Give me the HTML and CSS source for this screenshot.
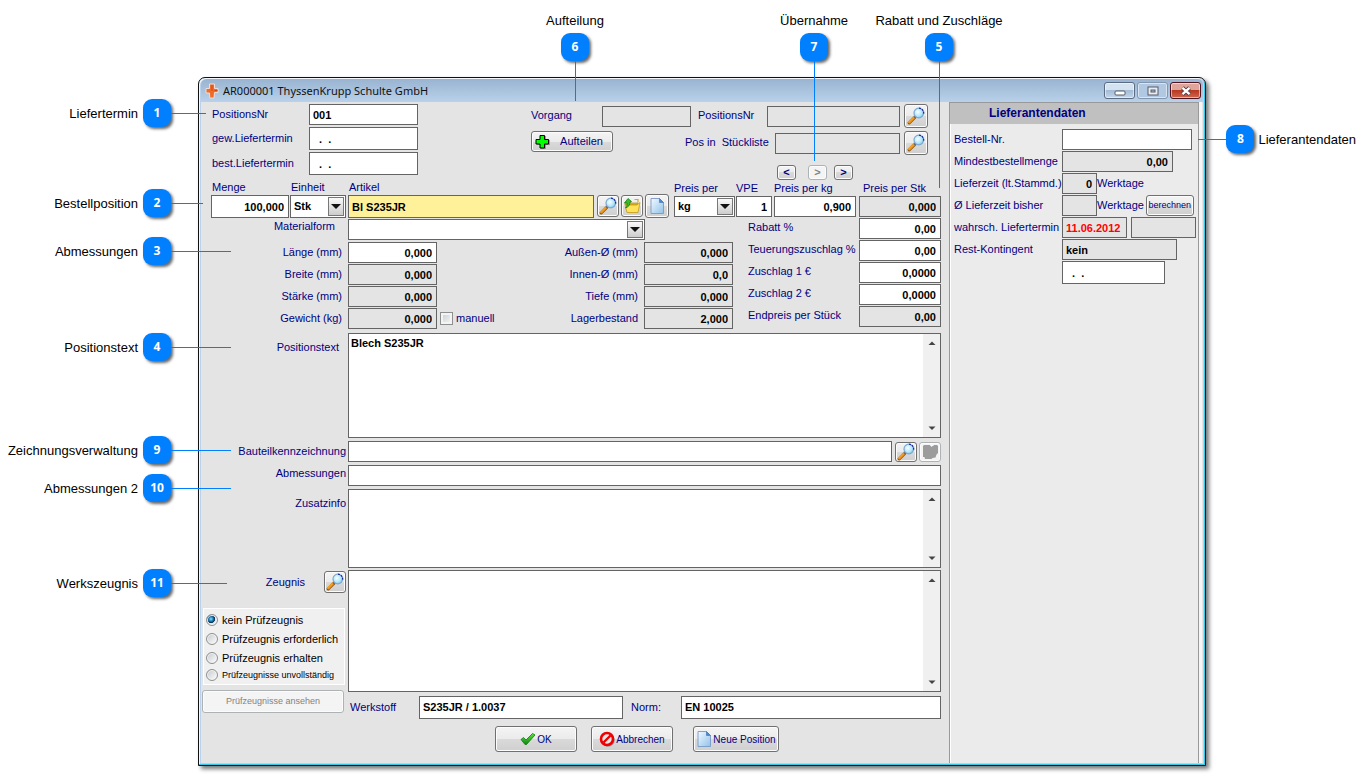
FILE: index.html
```html
<!DOCTYPE html>
<html lang="de">
<head>
<meta charset="utf-8">
<meta name="viewport" content="width=device-width, initial-scale=1">
<title>AR000001 ThyssenKrupp Schulte GmbH</title>
<link rel="stylesheet" href="styles.css">
</head>
<body>
<svg class="sprite" aria-hidden="true">
  <defs>
    <linearGradient id="handle" x1="0" y1="0" x2="1" y2="1"><stop offset="0" stop-color="#ffc04a"/><stop offset="1" stop-color="#e07800"/></linearGradient>
    <radialGradient id="lens" cx=".4" cy=".4" r=".7"><stop offset="0" stop-color="#f4ffff"/><stop offset=".6" stop-color="#b4e6fa"/><stop offset="1" stop-color="#6cb4e4"/></radialGradient>
    <linearGradient id="paper" x1="0" y1="0" x2="1" y2="1"><stop offset="0" stop-color="#f4faff"/><stop offset="1" stop-color="#8fc2ea"/></linearGradient>
    <linearGradient id="tick" x1="0" y1="0" x2="0" y2="1"><stop offset="0" stop-color="#5fe03a"/><stop offset="1" stop-color="#0a8a10"/></linearGradient>
  </defs>
  <symbol id="i-search" viewBox="0 0 18 18">
    <path d="M2.200 15.800 8 10" stroke="#8a5a20" stroke-width="3.200" stroke-linecap="round"/>
    <path d="M2.400 15 7.600 9.800" stroke="url(#handle)" stroke-width="2.600" stroke-linecap="round"/>
    <path d="M7.200 10.800l1.600-1.600" stroke="#666" stroke-width="2"/>
    <circle cx="11.800" cy="6" r="4.800" fill="url(#lens)" stroke="#7ca8d4" stroke-width="1.200"/>
    <path d="M12 1.200a4.800 4.800 0 0 1 4.400 6.400" fill="none" stroke="#1a2c9c" stroke-width="1.300" stroke-dasharray="2 1"/>
  </symbol>
  <symbol id="i-folder" viewBox="0 0 18 18">
    <path d="M2 8V5.500l1-1h4l1 1.500h7V8z" fill="#e8b820" stroke="#b08a10" stroke-width=".7"/>
    <path d="M2 8h12l3-2.500-2 10H4z" fill="#ffe25a" stroke="#c09a18" stroke-width=".8"/>
    <path d="M11.500 2.500h3.500v3" fill="none" stroke="#d8a820" stroke-width="1.200"/>
    <path d="M1.500 6 5 1.500 8.500 4.500 7 5c0 3-1.500 5-4.500 6C4 9 4.300 7.500 4 5.800z" fill="#35c02a" stroke="#12801a" stroke-width=".8"/>
  </symbol>
  <symbol id="i-page" viewBox="0 0 16 18">
    <path d="M2 1.500h8.500L14.500 5.500v11H2z" fill="url(#paper)" stroke="#7898c8" stroke-width=".9"/>
    <path d="M10.500 1.500v4h4z" fill="#4a8ad4" stroke="#4a78b8" stroke-width=".7"/>
  </symbol>
  <symbol id="i-blob" viewBox="0 0 18 18">
    <path d="M2 3l1-1h6l1.500 2 2-2H16l1 1v7l-1.500 1.500-1 3-3 .5-1 1H4l-.5-2L2 14z" fill="#9c9c9c"/>
    <path d="M10 1.500v1.500M12 1.500v1.500" stroke="#fff" stroke-width="1"/>
  </symbol>
  <symbol id="i-down" viewBox="0 0 10 6"><path d="M0 .5h10L5 5.500z" fill="#111"/></symbol>
  <symbol id="i-sdown" viewBox="0 0 8 5"><path d="M.5.5h7L4 4z" fill="#444"/></symbol>
  <symbol id="i-sup" viewBox="0 0 8 5"><path d="M.5 4h7L4 .5z" fill="#444"/></symbol>
</svg>

<div class="figure">
  <main class="window">
    <header class="titlebar">
      <svg class="logo" viewBox="0 0 14 16"><path d="M4.500 1h5v4.500H13v4H9.500L9 15H4.800L4.500 10H1V5.500h3.500z" fill="#f26a28" stroke="#eadfd8" stroke-width="1"/><path d="M7 2v6M9.500 7.500h3" stroke="#d04a10" stroke-width="1"/></svg>
      <h1 class="title">AR000001 ThyssenKrupp Schulte GmbH</h1>
      <div class="controls">
        <button class="control" aria-label="Minimieren"><svg width="12" height="6" viewBox="0 0 12 6"><rect x="1" y="1" width="10" height="4" rx="1" fill="#fff" stroke="#555a66"/></svg></button>
        <button class="control control-dim" aria-label="Maximieren"><svg width="12" height="10" viewBox="0 0 12 10"><rect x="1" y="1" width="10" height="8" fill="#e8ecf2" stroke="#555a66"/><rect x="4" y="4" width="4" height="2" fill="#a9c0da" stroke="#555a66"/></svg></button>
        <button class="control control-close" aria-label="Schließen"><svg width="14" height="10" viewBox="0 0 14 10"><path d="M3.500 1.800l7 6.400M10.500 1.800l-7 6.400" stroke="#4a3a44" stroke-width="4"/><path d="M3.500 1.800l7 6.400M10.500 1.800l-7 6.400" stroke="#fff" stroke-width="2.400"/></svg></button>
      </div>
    </header>

    <div class="content">
      <form class="form">
        <section class="head">
          <div class="dates">
            <label for="posnr">PositionsNr</label><input id="posnr" value="001">
            <label for="gew">gew.Liefertermin</label><input class="date" id="gew" value=".  .">
            <label for="best">best.Liefertermin</label><input class="date" id="best" value=".  .">
          </div>
          <div class="origin">
            <div class="origin-row">
              <label class="l-vorgang" for="vorgang">Vorgang</label><input class="w-vorgang" id="vorgang" readonly>
              <label class="l-pos2" for="pos2">PositionsNr</label><input class="w-pos2" id="pos2" readonly>
              <button type="button" class="btn icon-lg" aria-label="Position suchen"><svg class="icon"><use href="#i-search"/></svg></button>
            </div>
            <div class="origin-row">
              <button type="button" class="btn split"><svg width="16" height="16" viewBox="0 0 16 16"><path d="M6 2h5v4h4v5h-4v4H6v-4H2V6h4z" fill="#999"/><path d="M5 1.500h4.500v4h4V10h-4v4H5v-4H1V5.500h4z" fill="#0f0" stroke="#000"/></svg>Aufteilen</button>
              <label class="l-list" for="liste">Pos in &nbsp;Stückliste</label><input class="w-list" id="liste" readonly>
              <button type="button" class="btn icon-lg" aria-label="Stückliste suchen"><svg class="icon"><use href="#i-search"/></svg></button>
            </div>
            <div class="nav">
              <button type="button" class="btn step">&lt;</button>
              <button type="button" class="btn step step-mid" disabled>&gt;</button>
              <button type="button" class="btn step">&gt;</button>
            </div>
          </div>
        </section>

        <section class="order">
          <div class="field w-menge"><label for="menge">Menge</label><input class="num tall" id="menge" value="100,000"></div>
          <div class="field w-einheit"><label for="einheit">Einheit</label><span class="select tall"><select id="einheit"><option>Stk</option></select><svg class="arrow"><use href="#i-down"/></svg></span></div>
          <div class="field artikel"><label for="artikel">Artikel</label><input class="tall active" id="artikel" value="Bl S235JR"></div>
          <div class="tools">
            <button type="button" class="btn icon-sm" aria-label="Artikel suchen"><svg class="icon"><use href="#i-search"/></svg></button>
            <button type="button" class="btn icon-sm" aria-label="Artikel öffnen"><svg class="icon"><use href="#i-folder"/></svg></button>
            <button type="button" class="btn icon-lg" aria-label="Neuer Artikel"><svg class="icon"><use href="#i-page"/></svg></button>
          </div>
          <div class="pricing">
            <div class="field w-per"><label for="per">Preis per</label><span class="select"><select id="per"><option>kg</option></select><svg class="arrow"><use href="#i-down"/></svg></span></div>
            <div class="field w-vpe"><label for="vpe">VPE</label><input class="num" id="vpe" value="1"></div>
            <div class="field w-kg"><label for="pkg">Preis per kg</label><input class="num" id="pkg" value="0,900"></div>
            <div class="field w-stk"><label for="pstk">Preis per Stk</label><input class="num" id="pstk" value="0,000" readonly></div>
          </div>
        </section>

        <section class="details">
          <div class="measures">
            <div class="material"><label for="material">Materialform</label><span class="select"><select id="material"><option></option></select><svg class="arrow"><use href="#i-down"/></svg></span></div>
            <div class="dims">
              <label for="laenge">Länge (mm)</label><input class="num" id="laenge" value="0,000"><span></span>
              <label for="aussen">Außen-Ø (mm)</label><input class="num" id="aussen" value="0,000" readonly>
              <label for="breite">Breite (mm)</label><input class="num" id="breite" value="0,000" readonly><span></span>
              <label for="innen">Innen-Ø (mm)</label><input class="num" id="innen" value="0,0" readonly>
              <label for="staerke">Stärke (mm)</label><input class="num" id="staerke" value="0,000" readonly><span></span>
              <label for="tiefe">Tiefe (mm)</label><input class="num" id="tiefe" value="0,000" readonly>
              <label for="gewicht">Gewicht (kg)</label><input class="num" id="gewicht" value="0,000" readonly>
              <label class="manual"><input type="checkbox" class="check">manuell</label>
              <label for="lager">Lagerbestand</label><input class="num" id="lager" value="2,000" readonly>
            </div>
          </div>
          <div class="prices">
            <label for="rabatt">Rabatt %</label><input class="num" id="rabatt" value="0,00">
            <label for="teuerung">Teuerungszuschlag %</label><input class="num" id="teuerung" value="0,00">
            <label for="z1">Zuschlag 1 €</label><input class="num" id="z1" value="0,0000">
            <label for="z2">Zuschlag 2 €</label><input class="num" id="z2" value="0,0000">
            <label for="endpreis">Endpreis per Stück</label><input class="num" id="endpreis" value="0,00" readonly>
          </div>
        </section>

        <section class="texts">
          <label class="top inset" for="postext">Positionstext</label>
          <div class="memo memo-lg"><textarea id="postext">Blech S235JR</textarea><span class="scroll"><svg><use href="#i-sup"/></svg><svg><use href="#i-sdown"/></svg></span></div>
          <label for="bauteil">Bauteilkennzeichnung</label>
          <div class="part"><input id="bauteil">
            <button type="button" class="btn icon-sm" aria-label="Zeichnung suchen"><svg class="icon"><use href="#i-search"/></svg></button>
            <button type="button" class="btn icon-sm" aria-label="Zeichnung anzeigen" disabled><svg class="icon"><use href="#i-blob"/></svg></button>
          </div>
          <label class="raised" for="abm">Abmessungen</label><input id="abm">
          <label class="top" for="zusatz">Zusatzinfo</label>
          <div class="memo memo-sm"><textarea id="zusatz"></textarea><span class="scroll"><svg><use href="#i-sup"/></svg><svg><use href="#i-sdown"/></svg></span></div>
        </section>

        <section class="cert">
          <div class="cert-side">
            <div class="cert-head"><label for="zeugnis">Zeugnis</label><button type="button" class="btn icon-sm" aria-label="Zeugnis suchen"><svg class="icon"><use href="#i-search"/></svg></button></div>
            <div class="radios" role="radiogroup" aria-label="Prüfzeugnis">
              <label><input type="radio" name="pz" checked>kein Prüfzeugnis</label>
              <label><input type="radio" name="pz">Prüfzeugnis erforderlich</label>
              <label><input type="radio" name="pz">Prüfzeugnis erhalten</label>
              <label class="small"><input type="radio" name="pz">Prüfzeugnisse unvollständig</label>
            </div>
            <button type="button" class="btn view" disabled>Prüfzeugnisse ansehen</button>
          </div>
          <div class="cert-main">
            <div class="memo memo-xl"><textarea id="zeugnis"></textarea><span class="scroll"><svg><use href="#i-sup"/></svg><svg><use href="#i-sdown"/></svg></span></div>
            <div class="norm">
              <label class="l-werk" for="werkstoff">Werkstoff</label><input class="tall w-werk" id="werkstoff" value="S235JR / 1.0037">
              <label class="l-norm" for="norm">Norm:</label><input class="tall grow" id="norm" value="EN 10025">
            </div>
          </div>
        </section>

        <footer class="actions">
          <button type="button" class="btn action"><svg width="16" height="16" viewBox="0 0 16 16"><path d="M1 8.500 3.500 6.500 6 9 12.500 2.500 15 4 6.500 13.500H5z" fill="url(#tick)" stroke="#0b7a12" stroke-width=".8"/></svg>OK</button>
          <button type="button" class="btn action"><svg width="16" height="16" viewBox="0 0 16 16"><circle cx="9" cy="9" r="5.800" fill="none" stroke="#999" stroke-width="2"/><circle cx="8" cy="8" r="6" fill="#e8e8e8" stroke="#f00000" stroke-width="2.600"/><path d="M4.500 11.500l7-7" stroke="#f00000" stroke-width="2.400"/></svg>Abbrechen</button>
          <button type="button" class="btn action action-new"><svg width="16" height="18"><use href="#i-page"/></svg>Neue Position</button>
        </footer>
      </form>

      <aside class="supplier">
        <h2>Lieferantendaten</h2>
        <div class="supplier-grid">
          <label for="bnr">Bestell-Nr.</label><div><input class="s130" id="bnr"></div>
          <label for="mbm">Mindestbestellmenge</label><div><input class="s111 num" id="mbm" value="0,00" readonly></div>
          <label for="lz">Lieferzeit (lt.Stammd.)</label><div><input class="s35 num" id="lz" value="0" readonly><span>Werktage</span></div>
          <label for="lzb">Ø Lieferzeit bisher</label><div><input class="s35" id="lzb" readonly><span>Werktage</span><button type="button" class="btn calc">berechnen</button></div>
          <label for="wl">wahrsch. Liefertermin</label><div><input class="s65 due" id="wl" value="11.06.2012" readonly><input class="s65 second" aria-label="Liefertermin 2" readonly></div>
          <label for="rk">Rest-Kontingent</label><div><input class="s115" id="rk" value="kein" readonly></div>
          <span></span><div><input class="s103 tall date" aria-label="Kontingent bis" value=".  ."></div>
        </div>
      </aside>
    </div>
  </main>

  <div class="pin pin-left p1"><span class="pin-text">Liefertermin</span><b>1</b><i></i></div>
  <div class="pin pin-left p2"><span class="pin-text">Bestellposition</span><b>2</b><i></i></div>
  <div class="pin pin-left p3"><span class="pin-text">Abmessungen</span><b>3</b><i></i></div>
  <div class="pin pin-left p4"><span class="pin-text">Positionstext</span><b>4</b><i></i></div>
  <div class="pin pin-left p9"><span class="pin-text">Zeichnungsverwaltung</span><b>9</b><i></i></div>
  <div class="pin pin-left p10"><span class="pin-text">Abmessungen 2</span><b>10</b><i></i></div>
  <div class="pin pin-left p11"><span class="pin-text">Werkszeugnis</span><b>11</b><i></i></div>
  <div class="pin pin-top p6"><span class="pin-text">Aufteilung</span><b>6</b><i></i></div>
  <div class="pin pin-top p7"><span class="pin-text">Übernahme</span><b>7</b><i></i></div>
  <div class="pin pin-top p5"><span class="pin-text">Rabatt und Zuschläge</span><b>5</b><i></i></div>
  <div class="pin pin-right p8"><i></i><b>8</b><span class="pin-text">Lieferantendaten</span></div>
</div>
</body>
</html>
```
FILE: styles.css
```css
* { box-sizing: border-box; }

body {
  margin: 0;
  background: #fff;
  color: #000080;
  font: 11px/13px "Liberation Sans", Arial, sans-serif;
}

.sprite { position: absolute; width: 0; height: 0; }
.figure { position: relative; min-width: 1240px; padding: 77px 164px 8px 198px; }

/* Window frame */
.window {
  border: 1px solid #111;
  border-radius: 7px 7px 0 0;
  background: #b9d1ea;
  box-shadow: inset -1px -1px 0 #34c8e8, inset 1px 1px 0 #f4f8fc, 3px 3px 4px #0008;
  padding: 1px 2px 2px;
}
.titlebar {
  display: flex;
  align-items: center;
  height: 23px;
  padding: 0 2px 0 4px;
  background: linear-gradient(#99b4d1, #b9d1ea);
  border-radius: 6px 6px 0 0;
}
.logo { width: 14px; height: 16px; margin-right: 4px; }
.title { flex: 1; margin: 0; color: #111; font: 11px/16px "Noto Sans", sans-serif; }
.controls { display: flex; gap: 2px; }
.control {
  display: flex;
  align-items: center;
  justify-content: center;
  width: 31px;
  height: 17px;
  padding: 0;
  border: 1px solid #5b6c82;
  border-radius: 3px;
  background: linear-gradient(#d5e2f0 45%, #a5bcd6 50%, #c2d6eb);
  box-shadow: inset 0 0 0 1px #fff8;
}
.control:first-child { align-items: flex-end; padding-bottom: 2px; }
.control-dim { border-color: #8496ae; background: #b0c8e2; }
.control-close { border-color: #4e1420; background: linear-gradient(#e0a59a 45%, #b83a22 50%, #d0664c); }

.content { display: flex; padding-right: 4px; background: #e4e4e4; }
.form { flex: 1; min-width: 0; padding-right: 8px; }

/* Controls */
input, select, textarea {
  width: 100%;
  height: 21px;
  margin: 0;
  padding: 0 4px 0 3px;
  border: 1px solid #646464;
  border-radius: 0;
  outline: 0;
  background: #fff;
  color: #000;
  font: bold 11px/13px "Liberation Sans", Arial, sans-serif;
}
input:read-only:not([type="checkbox"]):not([type="radio"]) { background: #e4e4e4; }
.num { text-align: right; }
.tall { height: 23px; }
.date { padding-left: 9px; white-space: pre; }
label { white-space: nowrap; }

.select { position: relative; display: block; height: 21px; }
.select.tall { height: 23px; }
.select select { height: 100%; appearance: none; }
.arrow {
  position: absolute;
  top: 2px;
  right: 2px;
  width: 16px;
  height: calc(100% - 4px);
  padding: 4px 2px;
  border: 1px solid #777;
  background: linear-gradient(#fafafa, #ccc);
  pointer-events: none;
}

.btn {
  display: flex;
  flex: none;
  align-items: center;
  justify-content: center;
  padding: 0;
  border: 1px solid #707070;
  border-radius: 3px;
  background: linear-gradient(#f4f4f4, #ebebeb 50%, #dadada 50%, #cfcfcf);
  box-shadow: inset 0 0 0 1px #fcfcfc;
  color: #000080;
  font: 11px/13px "Liberation Sans", Arial, sans-serif;
  white-space: nowrap;
}
.btn:disabled { border-color: #adb2b5; background: #f4f4f4; color: #838383; }
.icon { width: 18px; height: 18px; }
.icon-sm { width: 22px; height: 22px; }
.icon-lg { width: 24px; height: 24px; }

/* Head */
.head { display: flex; justify-content: space-between; height: 79px; padding: 2px 13px 0 10px; }
.dates { display: grid; grid-template-columns: 98px 109px; grid-template-rows: 21px 23px 23px; row-gap: 2px; align-items: center; align-content: start; }
.dates .date { height: 23px; }
.dates label { padding-left: 1px; }
.origin { width: 397px; }
.origin-row { display: flex; align-items: center; margin-bottom: 3px; }
.origin-row label { padding-bottom: 2px; }
.w-vorgang { width: 89px; }
.w-pos2 { width: 133px; margin-right: 4px; }
.w-list { width: 125px; margin-right: 4px; }
.l-vorgang { width: 71px; }
.l-pos2 { width: 76px; padding-left: 7px; }
.l-list { width: 90px; margin-left: auto; }
.split { width: 82px; height: 21px; gap: 9px; margin-bottom: 3px; padding-right: 6px; }
.nav { display: flex; justify-content: flex-end; margin: 10px 75px 0 0; }
.step { width: 19px; height: 15px; font-weight: bold; }
.step-mid { margin: 0 7px 0 12px; }

/* Order line */
.order { display: flex; align-items: flex-start; padding-left: 10px; }
.field label { display: block; height: 14px; padding-left: 1px; }
.w-menge { width: 78px; margin-right: 1px; }
.w-einheit { width: 56px; margin-right: 2px; }
.artikel { flex: 1; }
.active { background: #fff09a; }
.tools { display: flex; align-items: center; gap: 2px; margin: 13px 5px 0 3px; }
.pricing { display: flex; padding-top: 1px; }
.pricing label { padding-left: 0; }
.w-per { width: 61px; margin-right: 1px; }
.w-vpe { width: 36px; margin-right: 2px; }
.w-kg { width: 82px; margin-right: 3px; }
.w-stk { width: 82px; }
.pricing .w-stk label { padding-left: 4px; }

/* Dimensions and surcharges */
.details { display: flex; }
.measures { flex: 1; padding-top: 1px; }
.material { display: flex; margin: 0 88px 2px 0; }
.material label { width: 147px; padding: 1px 13px 0 0; text-align: right; }
.material .select { flex: 1; }
.dims { display: grid; grid-template-columns: 141px 89px 1fr auto 89px; gap: 1px 6px; align-items: center; }
.dims > label { text-align: right; }
.dims > .manual { display: flex; align-items: center; gap: 3px; margin-left: -3px; }
.check { appearance: none; flex: none; width: 13px; height: 13px; padding: 0; border: 1px solid #8e8f8f; background: linear-gradient(135deg, #c8ccd0, #f8f8f8); box-shadow: inset 0 0 0 2px #f4f4f4; }
.prices { display: grid; grid-template-columns: 111px 82px; gap: 1px 0; align-content: start; margin-left: 15px; }
.prices label { padding-top: 3px; }

/* Long texts */
.texts { display: grid; grid-template-columns: 145px 1fr; column-gap: 2px; row-gap: 3px; margin-top: 4px; align-items: center; }
.texts > label { text-align: right; }
.texts > .top { align-self: start; padding-top: 8px; }
.texts > .inset { padding-right: 7px; }
.texts > .raised { padding-bottom: 5px; }
.memo { display: flex; border: 1px solid #646464; background: #fff; }
.memo textarea { flex: 1; height: 100%; padding: 3px 3px 3px 2px; border: 0; resize: none; overflow: hidden; }
.scroll { display: flex; flex-direction: column; justify-content: space-between; align-items: center; width: 17px; padding: 7px 0 6px; background: #f0f0f0; }
.scroll svg { width: 8px; height: 5px; }
.memo-lg { height: 105px; }
.memo-sm { height: 79px; }
.memo-xl { height: 122px; }
.part { display: flex; align-items: center; }
.part input { flex: 1; margin-right: 3px; }
.part .btn { height: 20px; margin-right: 2px; }
.part .btn:last-child { margin-right: 0; }

/* Certificates */
.cert { display: grid; grid-template-columns: 146px 1fr; column-gap: 1px; margin-top: 2px; }
.cert-side { display: flex; flex-direction: column; padding-left: 1px; }
.cert-head { display: flex; align-items: center; justify-content: flex-end; gap: 19px; height: 24px; padding-right: 1px; }
.radios { display: flex; flex-direction: column; gap: 1px; height: 79px; margin: 13px 1px 4px 0; padding: 3px 0 0 3px; border: 1px solid #dce4ec; box-shadow: inset 0 0 0 1px #fff; background: #f0f0f0; color: #000; }
.radios label { display: flex; align-items: center; gap: 4px; height: 18px; }
.radios input { appearance: none; flex: none; width: 12px; height: 12px; padding: 0; border: 1px solid #8e8f8f; border-radius: 50%; background: linear-gradient(135deg, #c4c8cc, #fff); box-shadow: inset 0 0 0 1px #f4f4f4; }
.radios input:checked { background: radial-gradient(circle at 40% 40%, #8fe0ff, #0c6ea8 30%, #0a2c50 44%, #e4e8ec 52%); }
.radios .small { height: 14px; font-size: 9px; }
.view { width: 142px; height: 23px; font-size: 9px; }
.norm { display: flex; align-items: center; margin-top: 4px; }
.l-werk { width: 71px; padding-left: 2px; }
.l-norm { width: 58px; padding-left: 8px; }
.w-werk { width: 204px; }
.grow { flex: 1; }
.norm input { padding-bottom: 2px; }

.actions { display: flex; gap: 14px; padding: 7px 0 11px 294px; }
.action { width: 82px; height: 26px; gap: 1px; font-size: 10px; }
.action-new { width: 86px; margin-left: 6px; }

/* Supplier panel */
.supplier { width: 250px; border: solid #999; border-width: 1px 1px 0; box-shadow: inset 1px 0 0 #fff, 3px 0 0 #f6f6f6; background: #ebebeb; }
.supplier h2 { margin: 0; padding-left: 39px; background: #c0c0c0; font-size: 12px; line-height: 21px; }
.supplier-grid { display: grid; grid-template-columns: 108px 1fr; gap: 1px 0; align-items: center; padding: 5px 0 0 4px; }
.supplier-grid > label { padding-bottom: 1px; }
.supplier-grid div { display: flex; align-items: center; }
.s130 { width: 130px; }
.s111 { width: 111px; }
.s35 { width: 35px; }
.s65 { width: 65px; }
.s115 { width: 115px; }
.s103 { width: 103px; }
.due { color: #f00; }
.second { margin-left: 4px; }
.calc { width: 48px; height: 21px; margin-left: 2px; font-size: 9px; }

/* Numbered callouts */
.pin { position: absolute; display: flex; align-items: center; color: #000; font-size: 13px; line-height: 16px; white-space: nowrap; pointer-events: none; }
.pin b { display: flex; flex: none; align-items: center; justify-content: center; width: 28px; height: 28px; border-radius: 9px; background: #0080ff; box-shadow: 2px 2px 3px #0009; color: #fff; font: bold 12px/16px "Noto Sans", sans-serif; }
.pin i { flex: none; background: #0080ff; }
.pin-text { padding-top: 1px; }
.pin-left { left: 0; }
.pin-left .pin-text { width: 138px; margin-right: 5px; text-align: right; }
.pin-left i { width: 60px; height: 1px; }
.pin-top { flex-direction: column; top: 12px; width: 140px; margin-left: -70px; }
.pin-top .pin-text { margin-bottom: 4px; }
.pin-top i { width: 1px; height: 40px; }
.pin-right { right: 14px; }
.pin-right .pin-text { margin-left: 4px; }
.pin-right i { width: 28px; height: 1px; }
.p1 { top: 99px; }
.p2 { top: 189px; }
.p3 { top: 237px; }
.p4 { top: 333px; }
.p9 { top: 436px; }
.p10 { top: 474px; }
.p11 { top: 569px; }
.p1 i { width: 35px; }
.p2 i { width: 32px; }
.p11 i { width: 56px; }
.p6 { left: 575px; }
.p7 { left: 814px; }
.p5 { left: 939px; }
.p7 i { height: 100px; }
.p5 i { height: 127px; }
.p8 { top: 125px; }
```
